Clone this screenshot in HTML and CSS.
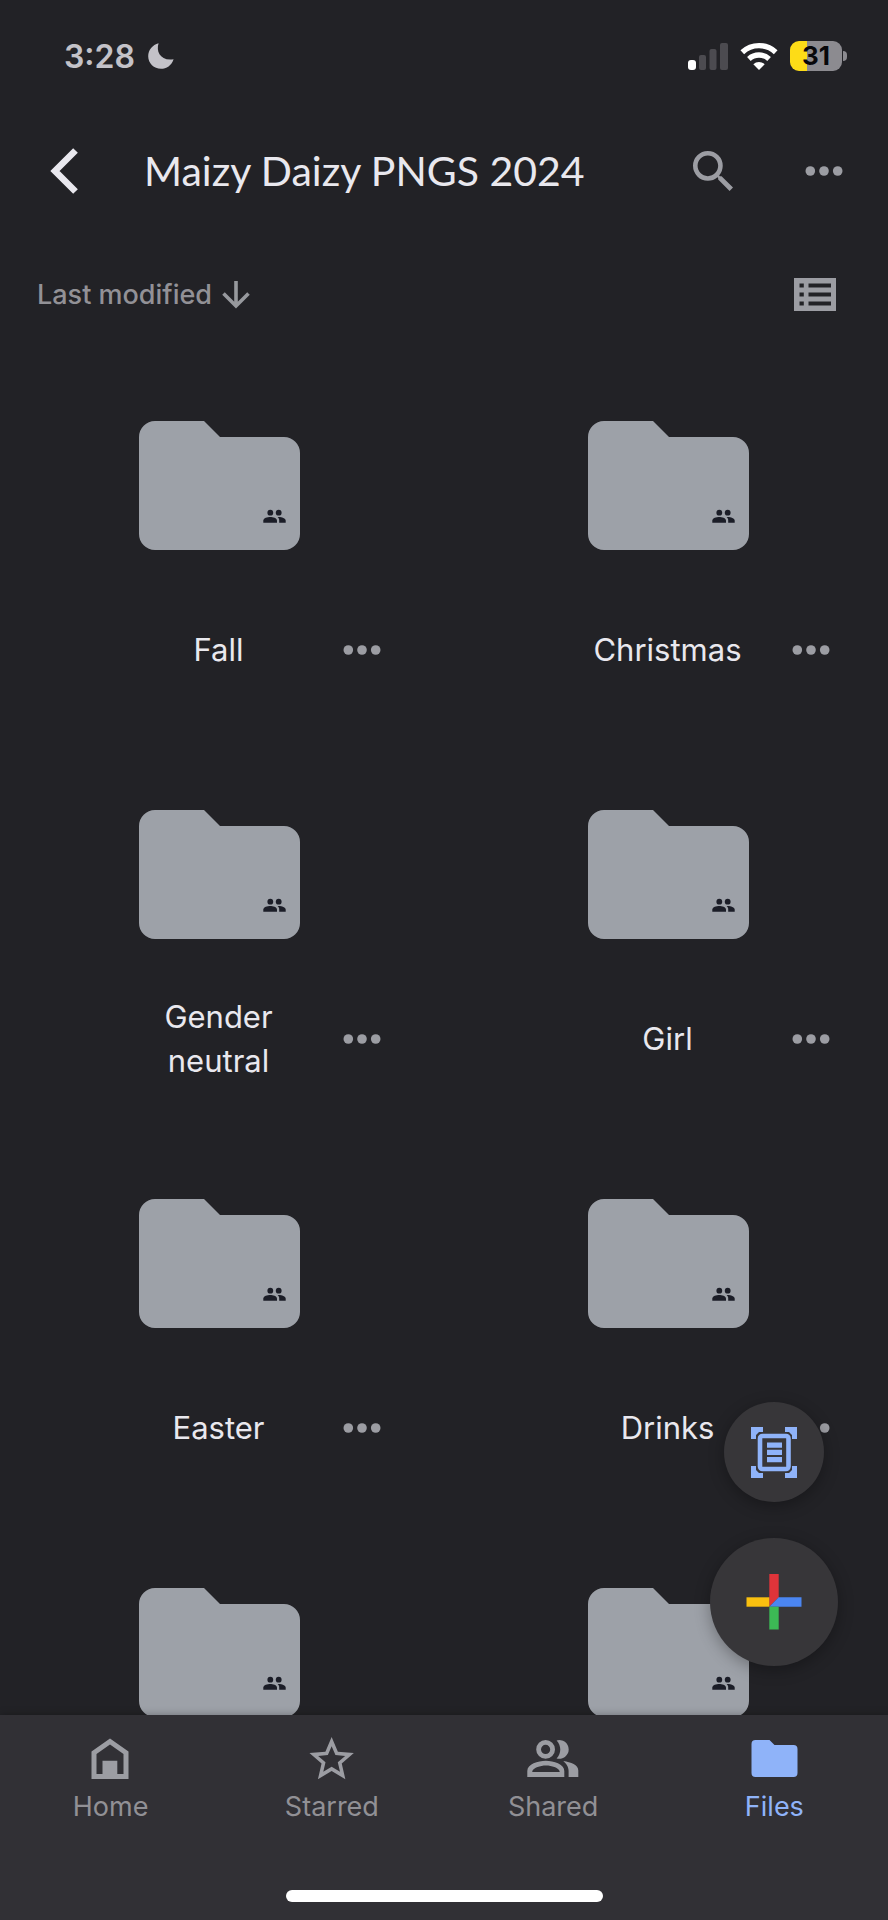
FILE: index.html
```html
<!DOCTYPE html>
<html lang="en">
<head>
<meta charset="utf-8">
<meta name="viewport" content="width=device-width, initial-scale=1">
<title>Maizy Daizy PNGS 2024</title>
<link rel="stylesheet" href="styles.css">
</head>
<body>
<svg class="defs" aria-hidden="true">
  <symbol id="folder" viewBox="0 0 161 129">
    <path fill="#9da1a8" d="M16 0H65L81 16H145A16 16 0 0 1 161 32V113A16 16 0 0 1 145 129H16A16 16 0 0 1 0 113V16A16 16 0 0 1 16 0Z"/>
    <g fill="#1b1d27">
      <circle cx="131.3" cy="91.7" r="2.9"/>
      <circle cx="139.7" cy="91.7" r="2.9"/>
      <path d="M124.3 101.8V99.6C124.3 97 128.5 96 131.2 96S138 97 138 99.6V101.8Z"/>
      <path d="M138.6 96.1C142 95.8 146.7 97 146.7 99.6V101.8H140.2V99.4C140.2 98 139.6 97 138.6 96.1Z"/>
    </g>
  </symbol>
  <symbol id="dots" viewBox="0 0 38 10">
    <circle cx="5.3" cy="5" r="4.8"/><circle cx="19" cy="5" r="4.8"/><circle cx="32.7" cy="5" r="4.8"/>
  </symbol>
</svg>
<div class="app">
  <div class="status">
    <span class="time">3:28</span>
    <svg class="moon" width="26" height="26" viewBox="0 0 26 26" aria-hidden="true"><path fill="#c3c2c8" d="M10.600 .2C7.800 8.500 12.500 18.200 25.600 16.200C23.500 22.500 18.500 25.800 13 25.800C6 25.800 .2 20.200 .2 13.200C.2 7 4.500 1.800 10.600 .2Z"/></svg>
    <div class="indicators">
      <svg width="40" height="27" viewBox="0 0 40 27" aria-hidden="true">
        <rect x="0" y="17" width="8" height="10" rx="3" fill="#fff"/>
        <g fill="#4c4b50"><rect x="11" y="12" width="7" height="15" rx="2"/><rect x="21.500" y="6" width="7" height="21" rx="2"/><rect x="32" y="0" width="8" height="27" rx="2"/></g>
      </svg>
      <svg width="38" height="28" viewBox="0 0 38 28" aria-hidden="true">
        <g fill="none" stroke="#fff" stroke-width="5.400"><path d="M2.300 10.200A24.500 24.500 0 0 1 35.700 10.200"/><path d="M8.900 16.900A15 15 0 0 1 29.100 16.900"/></g>
        <path fill="#fff" d="M19 28L13.300 22.200A8.200 8.200 0 0 1 24.700 22.200Z"/>
      </svg>
      <span class="battery">31</span>
    </div>
  </div>

  <header class="bar">
    <button class="icon-btn" aria-label="Back"><svg width="28" height="46" viewBox="0 0 28 46"><path fill="none" stroke="#e9e8ee" stroke-width="6.600" d="M25.500 2.500L5 23L25.500 43.500"/></svg></button>
    <h1 class="title">Maizy Daizy PNGS 2024</h1>
    <button class="icon-btn" aria-label="Search"><svg width="40" height="40" viewBox="3 3 17.490 17.490"><path d="M15.500 14h-.790l-.280-.270A6.471 6.471 0 0 0 16 9.500 6.500 6.500 0 1 0 9.500 16c1.610 0 3.090-.590 4.230-1.570l.270.280v.790l5 4.990L20.490 19l-4.990-5zm-6 0C7.010 14 5 11.990 5 9.500S7.010 5 9.500 5 14 7.010 14 9.500 11.990 14 9.500 14z"/></svg></button>
    <button class="icon-btn" aria-label="More options"><svg width="38" height="10"><use href="#dots"/></svg></button>
  </header>

  <div class="sort">
    <button class="sort-btn">Last modified
      <svg width="28" height="28" viewBox="0 0 28 28" aria-hidden="true"><path fill="none" stroke="#97999d" stroke-width="3.600" d="M14 0V24M1.500 12.500L14 25L26.500 12.500"/></svg>
    </button>
    <button class="icon-btn" aria-label="List view"><svg width="42" height="33" viewBox="0 0 42 33"><path fill-rule="evenodd" d="M0 0H42V33H0ZM5.500 5.500V9.500H9.800V5.500ZM14.500 5.500V9.500H37V5.500ZM5.500 14.500V18.500H9.800V14.500ZM14.500 14.500V18.500H37V14.500ZM5.500 23.500V27.500H9.800V23.500ZM14.500 23.500V27.500H37V23.500Z"/></svg></button>
  </div>

  <main class="files">
    <ul class="grid">
      <li class="card"><svg class="folder" aria-hidden="true"><use href="#folder"/></svg><div class="row"><span class="name">Fall</span><button class="icon-btn more" aria-label="More for Fall"><svg width="38" height="10"><use href="#dots"/></svg></button></div></li>
      <li class="card"><svg class="folder" aria-hidden="true"><use href="#folder"/></svg><div class="row"><span class="name">Christmas</span><button class="icon-btn more" aria-label="More for Christmas"><svg width="38" height="10"><use href="#dots"/></svg></button></div></li>
      <li class="card"><svg class="folder" aria-hidden="true"><use href="#folder"/></svg><div class="row"><span class="name">Gender neutral</span><button class="icon-btn more" aria-label="More for Gender neutral"><svg width="38" height="10"><use href="#dots"/></svg></button></div></li>
      <li class="card"><svg class="folder" aria-hidden="true"><use href="#folder"/></svg><div class="row"><span class="name">Girl</span><button class="icon-btn more" aria-label="More for Girl"><svg width="38" height="10"><use href="#dots"/></svg></button></div></li>
      <li class="card"><svg class="folder" aria-hidden="true"><use href="#folder"/></svg><div class="row"><span class="name">Easter</span><button class="icon-btn more" aria-label="More for Easter"><svg width="38" height="10"><use href="#dots"/></svg></button></div></li>
      <li class="card"><svg class="folder" aria-hidden="true"><use href="#folder"/></svg><div class="row"><span class="name">Drinks</span><button class="icon-btn more" aria-label="More for Drinks"><svg width="38" height="10"><use href="#dots"/></svg></button></div></li>
      <li class="card"><svg class="folder" aria-hidden="true"><use href="#folder"/></svg></li>
      <li class="card"><svg class="folder" aria-hidden="true"><use href="#folder"/></svg></li>
    </ul>
    <div class="fabs">
      <button class="fab" aria-label="Scan document"><svg width="46" height="51" viewBox="0 0 46 51">
        <path fill="#8fb3f9" d="M0 0H12V5H5V12H0ZM46 0H34V5H41V12H46ZM0 51H12V46H5V39H0ZM46 51H34V46H41V39H46Z"/>
        <rect x="5.500" y="5.500" width="35" height="40" rx="6" fill="#373639"/>
        <rect x="9" y="9" width="28.500" height="33" rx="2.500" fill="none" stroke="#8fb3f9" stroke-width="4.600"/>
        <path fill="#8fb3f9" d="M16 15.500H31V20.800H16ZM16 22.800H31V28H16ZM16 30H31V35.200H16Z"/>
        <path fill="#8fb3f9" d="M0 0H12V3.500L8 5L5 8L3.500 12H0ZM46 0H34V3.500L38 5L41 8L42.500 12H46ZM0 51H12V47.500L8 46L5 43L3.500 39H0ZM46 51H34V47.500L38 46L41 43L42.500 39H46Z"/>
      </svg></button>
      <button class="fab fab-large" aria-label="Create new"><svg width="56" height="56" viewBox="0 0 56 56">
        <path fill="#df343a" d="M23.300 0H32.700V23.300L23.300 32.700Z"/>
        <path fill="#f9c00f" d="M.5 23.300H23.300V32.700H.5Z"/>
        <path fill="#4b86f2" d="M32.700 23.300H55.500V32.700H23.300Z"/>
        <path fill="#3cb955" d="M23.300 32.700H32.700V55.500H23.300Z"/>
      </svg></button>
    </div>
  </main>

  <footer class="bottom">
    <nav class="tabs" aria-label="Main">
      <a class="tab" href="#home"><svg width="52" height="44" viewBox="0 0 52 44"><path fill-rule="evenodd" d="M6.500 14.500L25 1.500L43.500 14.500V42H6.500ZM11.500 17V37H17.500V23.700H32.300V37H38.500V17L25 7.600Z"/></svg>Home</a>
      <a class="tab" href="#starred"><svg width="52" height="44" viewBox="0 0 52 44"><path transform="translate(-1 -4.400) scale(2.220)" d="M22 9.240l-7.190-.620L12 2 9.190 8.630 2 9.240l5.460 4.730L5.820 21 12 17.270 18.180 21l-1.630-7.030L22 9.240zM12 15.400l-3.760 2.270 1-4.280-3.320-2.880 4.380-.380L12 6.100l1.710 4.040 4.380.380-3.320 2.880 1 4.280L12 15.400z"/></svg>Starred</a>
      <a class="tab" href="#shared"><svg width="52" height="44" viewBox="0 0 52 44"><circle cx="18.600" cy="12.400" r="7" fill="none" stroke="#9c9da3" stroke-width="4.800"/><path d="M29.600 3.400A9.400 9.400 0 1 1 29.600 21.400C34.500 16 34.500 8.800 29.600 3.400Z"/><path fill-rule="evenodd" d="M.3 40V34C.3 27 11 23.700 18.800 23.700S37.300 27 37.300 34V40ZM5.300 35H32.600V34C31 31 25 28.600 19 28.600S7 31 5.300 34Z"/><path d="M36.300 24C44 25 51.300 28 51.300 33.500V40H41.600V34C41.600 29.500 39 26.500 36.300 24Z"/></svg>Shared</a>
      <a class="tab tab-active" href="#files" aria-current="page"><svg width="52" height="44" viewBox="0 0 52 44"><path d="M7.500 3H21.500L26.500 8H45.500A4 4 0 0 1 49.500 12V36A4 4 0 0 1 45.500 40H7.500A4 4 0 0 1 3.500 36V7A4 4 0 0 1 7.500 3Z"/></svg>Files</a>
    </nav>
    <div class="home-indicator"></div>
  </footer>
</div>
</body>
</html>
```
FILE: styles.css
```css
* { box-sizing: border-box; }

body {
  margin: 0;
  background: #222226;
  color: #e9e8ee;
  font-family: Inter, "Liberation Sans", sans-serif;
}

.defs { position: absolute; width: 0; height: 0; }

svg { display: block; flex: none; }

.app {
  display: flex;
  flex-direction: column;
  height: 100vh;
}

.status {
  display: flex;
  align-items: center;
  gap: 13px;
  height: 112px;
  padding: 0 46px 0 64px;
}

.time {
  color: #c3c2c8;
  font-size: 32px;
  font-weight: 600;
}

.indicators {
  display: flex;
  align-items: center;
  gap: 12px;
  margin-left: auto;
}

.battery {
  position: relative;
  width: 52px;
  height: 30px;
  border-radius: 9px;
  background: linear-gradient(90deg, #fddc17 17px, #8c8b90 17px);
  color: #08080a;
  font-size: 26px;
  font-weight: 700;
  line-height: 30px;
  text-align: center;
}

.battery::after {
  content: "";
  position: absolute;
  top: 10px;
  right: -5px;
  width: 4px;
  height: 10px;
  border-radius: 0 4px 4px 0;
  background: #8c8b90;
}

.icon-btn {
  display: flex;
  align-items: center;
  justify-content: center;
  padding: 0;
  border: 0;
  background: none;
  color: #9c9da3;
  fill: currentColor;
}

.bar {
  display: flex;
  align-items: center;
  gap: 72px;
  height: 117px;
  padding: 0 45px 0 50px;
}

.title {
  flex: 1;
  margin: 0 0 0 -6px;
  font-family: Lato, "Open Sans", sans-serif;
  font-size: 41px;
  font-weight: 400;
  line-height: 48px;
  white-space: nowrap;
}

.sort {
  display: flex;
  align-items: center;
  justify-content: space-between;
  height: 131px;
  padding: 0 52px 0 37px;
}

.sort-btn {
  display: flex;
  align-items: center;
  gap: 10px;
  padding: 0;
  border: 0;
  background: none;
  color: #929196;
  font: 500 27px Inter, "Liberation Sans", sans-serif;
}

.files {
  position: relative;
  flex: 1;
  min-height: 0;
  overflow: hidden;
}

.grid {
  display: grid;
  grid-template-columns: 1fr 1fr;
  column-gap: 42px;
  margin: 0;
  padding: 0 16px;
  list-style: none;
}

.card {
  display: flex;
  flex-direction: column;
  align-items: center;
  gap: 56px;
  padding: 61px 0 55px;
}

.folder { width: 161px; height: 129px; }

.row {
  display: grid;
  grid-template-columns: 120px 1fr 122px;
  align-items: center;
  width: 100%;
  height: 88px;
}

.name {
  grid-column: 2;
  font-size: 31px;
  line-height: 44px;
  text-align: center;
}

.more { height: 88px; }

.fabs {
  position: absolute;
  right: 50px;
  bottom: 49px;
  display: flex;
  flex-direction: column;
  align-items: center;
  gap: 36px;
}

.fab {
  display: flex;
  align-items: center;
  justify-content: center;
  width: 100px;
  height: 100px;
  padding: 0;
  border: 0;
  border-radius: 50%;
  background: #373639;
  box-shadow: 0 4px 16px rgba(0, 0, 0, 0.3);
}

.fab-large { width: 128px; height: 128px; }

.bottom {
  position: relative;
  padding: 22px 0 18px;
  background: #313035;
  box-shadow: 0 0 8px rgba(0, 0, 0, 0.3);
}

.tabs {
  display: grid;
  grid-template-columns: repeat(4, 1fr);
  padding-right: 3px;
}

.tab {
  display: flex;
  flex-direction: column;
  align-items: center;
  gap: 8px;
  color: #919095;
  fill: #9c9da3;
  font-size: 27px;
  line-height: 36px;
  text-decoration: none;
}

.tab-active { color: #8fb3f9; fill: #8fb3f9; }

.home-indicator {
  width: 317px;
  height: 12px;
  margin: 65px auto 0;
  border-radius: 6px;
  background: #fff;
}
```
